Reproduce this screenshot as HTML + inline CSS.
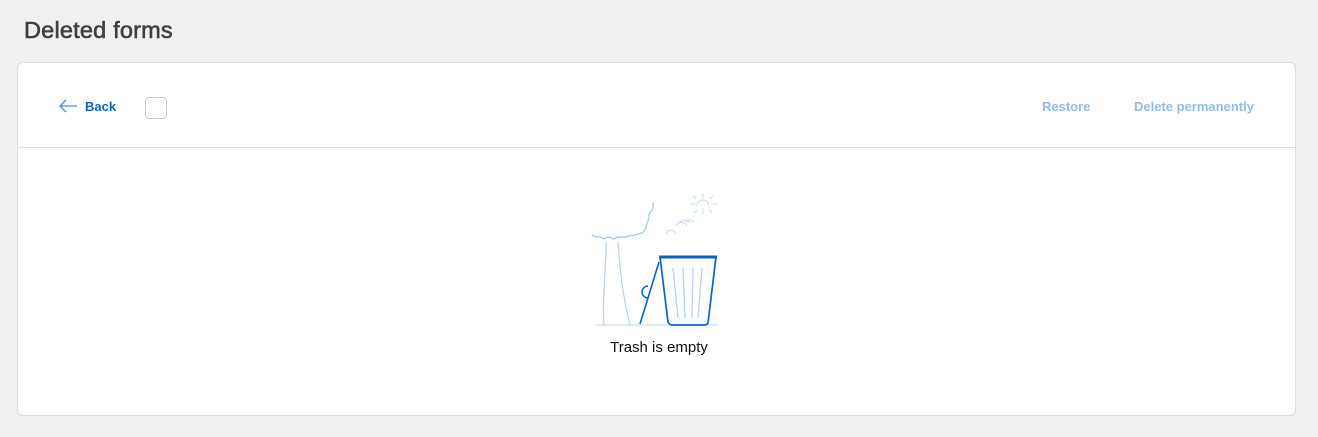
<!DOCTYPE html>
<html><head><style>
body{margin:0;background:#f0f0f0;font-family:"Liberation Sans",Arial,sans-serif;width:1318px;height:437px;overflow:hidden;position:relative}
h1{position:absolute;left:24px;top:17px;margin:0;font-size:23.5px;font-weight:normal;color:#3c4146;letter-spacing:0.2px;-webkit-text-stroke:0.6px #3c4146}
.card{position:absolute;left:17px;top:62px;width:1277px;height:352px;background:#fff;border:1px solid #dcdcdc;border-radius:6px}
.hdr{height:84px;border-bottom:1px solid #e0e0e0;position:relative}
.back{position:absolute;left:40px;top:36px;color:#0a64c8;font-size:13px;font-weight:bold}
.cb{position:absolute;left:127px;top:34px;width:20px;height:20px;border:1px solid #ccc;border-radius:4px}
.act{position:absolute;top:36px;color:#8fbde8;font-size:13px;font-weight:bold}
.msg{position:absolute;left:0;width:100%;top:339px;text-align:center;font-size:15px;color:#111}
</style></head><body>
<h1>Deleted forms</h1>
<div class="card">
<div class="hdr">
<svg style="position:absolute;left:39px;top:35px" width="22" height="16"><path d="M20 8H3M9 2L3 8l6 6" stroke="#4a8fdc" stroke-width="1.3" fill="none"/></svg>
<span class="back" style="left:67px">Back</span>
<div class="cb"></div>
<span class="act" style="left:1024px">Restore</span>
<span class="act" style="left:1116px">Delete permanently</span>
</div>
</div>
<svg style="position:absolute;left:580px;top:190px" width="150" height="145" fill="none">
<line x1="16" y1="135" x2="138" y2="135" stroke="#d5e4f5" stroke-width="1.5"/>
<path d="M12 45c3 3 8 0 12 4 4-4 8 0 10 0 4-4 10 0 14-3 6 0 10-2 14-3 6-5 4-10 6-12 2-4 0-6 2-8 1-4 4-2 3-10" stroke="#9cc3ec" stroke-width="1.2"/>
<path d="M26 52c0 30-4 60-2 83M38 52c2 30 6 60 12 83" stroke="#b3d1f0" stroke-width="1.2"/>
<path d="M86 44c2-5 8-5 10 0M96 36c2-5 9-5 11 0M98 34c3-5 10-5 12-1M106 32c2-3 6-3 8 0" stroke="#c5dcf4" stroke-width="1"/>
<path d="M117 16a6 6 0 0 1 12 0" stroke="#c5dcf4" stroke-width="1"/>
<path d="M110 14h5M131 14h6M123 8v-4M123 18v6M116 9l-3-3M130 9l3-3M117 20l-3 3M129 20l3 3" stroke="#c5dcf4" stroke-width="1"/>
<path d="M79 72L60 134" stroke="#0a64c8" stroke-width="1.6"/>
<path d="M68 96a6 6 0 0 0 0 12" stroke="#0a64c8" stroke-width="1.5"/>
<path d="M80 67h56l-8 66c-1 2-3 2-4 2h-32c-2 0-3-1-4-3z" stroke="#0a64c8" stroke-width="1.7"/>
<line x1="79" y1="67" x2="137" y2="67" stroke="#0a64c8" stroke-width="3"/>
<path d="M93 78l5 50M103 78l2 50M113 78l-1 50M122 78l-4 50" stroke="#b3d1f0" stroke-width="1.3"/>
</svg>
<div class="msg">Trash is empty</div>
</body></html>
